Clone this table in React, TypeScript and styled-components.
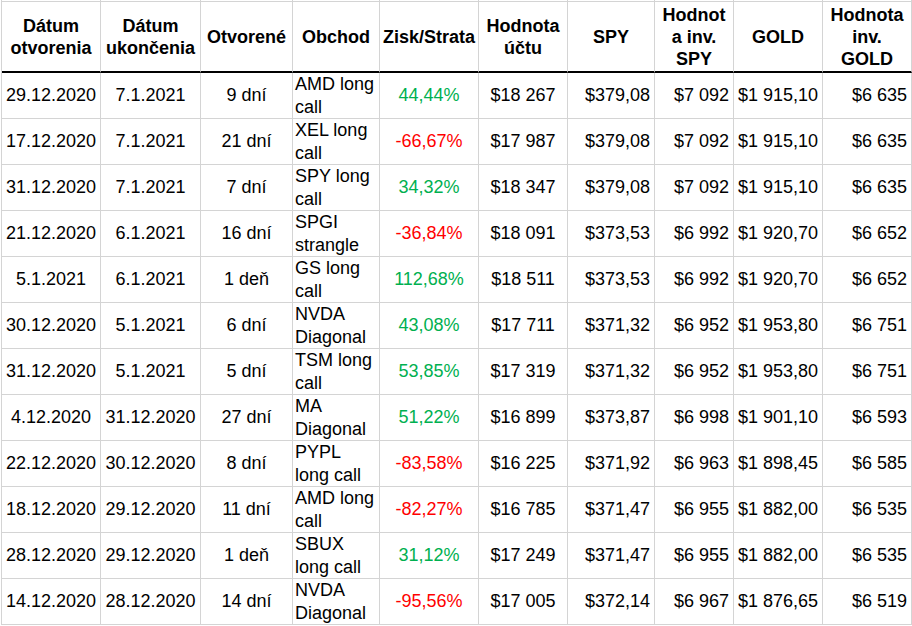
import styled, { createGlobalStyle } from "styled-components";

const GlobalStyle = createGlobalStyle`
  * {
    box-sizing: border-box;
  }
  body {
    margin: 0;
    background: #fff;
    font-family: "Liberation Sans", Arial, sans-serif;
  }
`;

type Align = "center" | "left" | "right";

const columns: { title: string; width: number; align: Align }[] = [
  { title: "Dátum\notvorenia", width: 99, align: "center" },
  { title: "Dátum\nukončenia", width: 100, align: "center" },
  { title: "Otvorené", width: 92, align: "center" },
  { title: "Obchod", width: 87, align: "left" },
  { title: "Zisk/Strata", width: 99, align: "center" },
  { title: "Hodnota\núčtu", width: 89, align: "center" },
  { title: "SPY", width: 87, align: "right" },
  { title: "Hodnot\na inv.\nSPY", width: 79, align: "right" },
  { title: "GOLD", width: 89, align: "right" },
  { title: "Hodnota\ninv.\nGOLD", width: 89, align: "right" },
];

const trades = [
  ["29.12.2020", "7.1.2021", "9 dní", "AMD long\ncall", "44,44%", "$18 267", "$379,08", "$7 092", "$1 915,10", "$6 635"],
  ["17.12.2020", "7.1.2021", "21 dní", "XEL long\ncall", "-66,67%", "$17 987", "$379,08", "$7 092", "$1 915,10", "$6 635"],
  ["31.12.2020", "7.1.2021", "7 dní", "SPY long\ncall", "34,32%", "$18 347", "$379,08", "$7 092", "$1 915,10", "$6 635"],
  ["21.12.2020", "6.1.2021", "16 dní", "SPGI\nstrangle", "-36,84%", "$18 091", "$373,53", "$6 992", "$1 920,70", "$6 652"],
  ["5.1.2021", "6.1.2021", "1 deň", "GS long\ncall", "112,68%", "$18 511", "$373,53", "$6 992", "$1 920,70", "$6 652"],
  ["30.12.2020", "5.1.2021", "6 dní", "NVDA\nDiagonal", "43,08%", "$17 711", "$371,32", "$6 952", "$1 953,80", "$6 751"],
  ["31.12.2020", "5.1.2021", "5 dní", "TSM long\ncall", "53,85%", "$17 319", "$371,32", "$6 952", "$1 953,80", "$6 751"],
  ["4.12.2020", "31.12.2020", "27 dní", "MA\nDiagonal", "51,22%", "$16 899", "$373,87", "$6 998", "$1 901,10", "$6 593"],
  ["22.12.2020", "30.12.2020", "8 dní", "PYPL\nlong call", "-83,58%", "$16 225", "$371,92", "$6 963", "$1 898,45", "$6 585"],
  ["18.12.2020", "29.12.2020", "11 dní", "AMD long\ncall", "-82,27%", "$16 785", "$371,47", "$6 955", "$1 882,00", "$6 535"],
  ["28.12.2020", "29.12.2020", "1 deň", "SBUX\nlong call", "31,12%", "$17 249", "$371,47", "$6 955", "$1 882,00", "$6 535"],
  ["14.12.2020", "28.12.2020", "14 dní", "NVDA\nDiagonal", "-95,56%", "$17 005", "$372,14", "$6 967", "$1 876,65", "$6 519"],
];

function App() {
  return (
    <>
      <GlobalStyle />
      <Sheet $cols={columns.map((c) => c.width + "px").join(" ")}>
        {columns.map((c, i) => (
          <CutCell key={"cut" + i} />
        ))}
        {columns.map((c, i) => (
          <HeadCell key={"h" + i}>{c.title}</HeadCell>
        ))}
        {trades.map((row, r) =>
          row.map((value, i) => {
            const tone =
              i === 4 ? (value.startsWith("-") ? "loss" : "gain") : undefined;
            return (
              <Cell key={r + "-" + i} $align={columns[i].align} $tone={tone}>
                {value}
              </Cell>
            );
          })
        )}
      </Sheet>
    </>
  );
}

const Sheet = styled.div<{ $cols: string }>`
  display: grid;
  grid-template-columns: ${(p) => p.$cols};
  grid-template-rows: 2px 71px;
  grid-auto-rows: 46px;
  margin-left: 1px;
  border-left: 1px solid #d4d4d4;
  width: max-content;
  color: #000;
  font-size: 18px;
`;

const CutCell = styled.div`
  border-right: 1px solid #d4d4d4;
  border-bottom: 1px solid #d4d4d4;
`;

const HeadCell = styled.div`
  display: flex;
  align-items: center;
  justify-content: center;
  text-align: center;
  white-space: pre-line;
  font-weight: 700;
  line-height: 22px;
  padding-top: 1px;
  border-right: 1px solid #d4d4d4;
  border-bottom: 2px solid #000;
`;

const Cell = styled.div<{ $align: Align; $tone?: "gain" | "loss" }>`
  display: flex;
  align-items: center;
  justify-content: ${(p) =>
    p.$align === "left" ? "flex-start" : p.$align === "right" ? "flex-end" : "center"};
  text-align: ${(p) => p.$align};
  white-space: pre-line;
  line-height: 22.5px;
  padding: 0 ${(p) => (p.$align === "right" ? "4px" : "0")} 0
    ${(p) => (p.$align === "left" ? "2px" : "0")};
  color: ${(p) =>
    p.$tone === "gain" ? "#00b050" : p.$tone === "loss" ? "#ff0000" : "#000"};
  border-right: 1px solid #d4d4d4;
  border-bottom: 1px solid #d4d4d4;
`;

export default App;
